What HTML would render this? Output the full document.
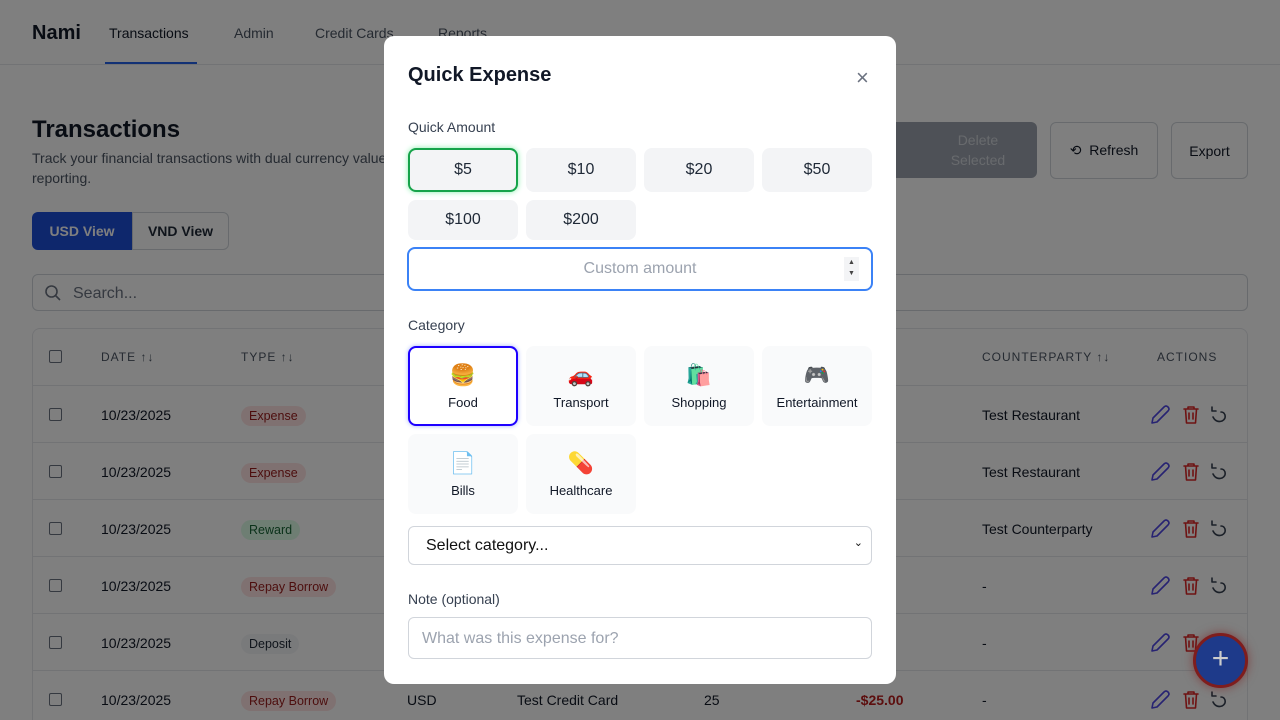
<!DOCTYPE html>
<html><head><meta charset="utf-8"><style>
*{box-sizing:border-box;margin:0;padding:0}
html{width:1280px;height:720px;overflow:hidden}
body{width:1280px;height:720px;overflow:hidden;font-family:"Liberation Sans",sans-serif;background:#fff;position:relative;color:#111827}
.hdr{position:absolute;left:0;top:0;width:1280px;height:65px;border-bottom:1px solid #e5e7eb;background:#fff}
.abs{position:absolute;white-space:nowrap}
.btn{position:absolute;border:1px solid #d1d5db;border-radius:6px;background:#fff;font-size:14px;display:flex;align-items:center;justify-content:center;color:#111827}
.tbl{position:absolute;left:32px;top:328px;width:1216px;height:392px;border:1px solid #e5e7eb;border-bottom:none;border-radius:8px 8px 0 0;background:#fff;overflow:hidden}
.row{position:absolute;left:0;width:1214px;border-top:1px solid #e5e7eb;height:57px}
.cb{position:absolute;left:16px;width:13px;height:13px;border:1px solid #6b7280;border-radius:2px}
.badge{position:absolute;left:208px;font-size:12.5px;padding:3px 8px;border-radius:10px}
.ov{position:fixed;left:0;top:0;width:1280px;height:720px;background:rgba(0,0,0,.5)}
.modal{position:absolute;left:384px;top:36px;width:512px;height:648px;background:#fff;border-radius:10px}
.qa{position:absolute;width:110px;background:#f3f4f6;border-radius:8px;font-size:16px;display:flex;align-items:center;justify-content:center;color:#1f2937}
.tile{position:absolute;width:110px;height:80px;background:#f9fafb;border-radius:8px;font-size:13px;text-align:center;color:#111827}
.tile .e{display:block;font-size:21px;margin-top:18px;height:28px;font-family:"Noto Color Emoji","DejaVu Sans",sans-serif}
.tile .t{display:block;margin-top:3px}
.lbl{position:absolute;left:24px;font-size:14px;color:#374151}
.act{position:absolute;left:1116px;top:17px}
</style></head><body>
<svg width="0" height="0" style="position:absolute"><defs>
<g id="acts" fill="none" stroke-width="1.6" stroke-linecap="round" stroke-linejoin="round">
<path d="M3 20 L4 15 L15 4 Q17 2 19 4 Q21 6 19 8 L8 19 Z" stroke="#4f46e5"/>
<g stroke="#dc2626" transform="translate(30,0)"><path d="M5 6 H19 M9 6 V4 H15 V6 M6.5 6 L7.5 20 H16.5 L17.5 6 M10 10 V16 M14 10 V16"/></g>
<g stroke="#374151" transform="translate(58,0)"><path d="M5 4 V8 H9 M6 14 Q9 20 15 18 Q19 16 18 12 Q17 9 14 9"/></g>
</g></defs></svg>
<div class="hdr">
<div class="abs" style="left:32px;top:22px;font-size:20px;font-weight:bold">Nami</div>
<div class="abs" style="left:109px;top:25px;font-size:14px">Transactions</div>
<div class="abs" style="left:234px;top:25px;font-size:14px;color:#4b5563">Admin</div>
<div class="abs" style="left:315px;top:25px;font-size:14px;color:#4b5563">Credit Cards</div>
<div class="abs" style="left:438px;top:25px;font-size:14px;color:#4b5563">Reports</div>
<div class="abs" style="left:105px;top:62px;width:92px;height:2px;background:#2563eb"></div>
</div>
<div class="abs" style="left:32px;top:116px;font-size:24px;font-weight:bold">Transactions</div>
<div class="abs" style="left:32px;top:148px;font-size:14px;color:#4b5563;line-height:20px">Track your financial transactions with dual currency value<br>reporting.</div>
<div class="btn" style="left:880px;top:122px;width:157px;height:56px;background:#9ca3af;border:none;color:#d1d5db;line-height:20px;text-align:center">&nbsp;&nbsp;&nbsp;&nbsp;&nbsp;&nbsp;&nbsp;&nbsp;&nbsp;&nbsp;Delete<br>&nbsp;&nbsp;&nbsp;&nbsp;&nbsp;&nbsp;&nbsp;&nbsp;&nbsp;&nbsp;Selected</div>
<div class="btn" style="left:1050px;top:122px;width:108px;height:57px">⟲&nbsp; Refresh</div>
<div class="btn" style="left:1171px;top:122px;width:77px;height:57px">Export</div>
<div class="abs" style="left:32px;top:212px;width:100px;height:38px;background:#1d4ed8;color:#fff;font-size:14px;font-weight:bold;border-radius:6px 0 0 6px;display:flex;align-items:center;justify-content:center">USD View</div>
<div class="abs" style="left:132px;top:212px;width:97px;height:38px;border:1px solid #d1d5db;border-radius:0 6px 6px 0;font-size:14px;font-weight:bold;display:flex;align-items:center;justify-content:center;color:#1f2937">VND View</div>
<div class="abs" style="left:32px;top:274px;width:1216px;height:37px;border:1px solid #d1d5db;border-radius:6px;font-size:16px;color:#6b7280;padding:10px 0 0 40px">Search...</div>
<svg class="abs" style="left:44px;top:284px" width="18" height="18" viewBox="0 0 18 18" fill="none" stroke="#6b7280" stroke-width="1.6"><circle cx="7.5" cy="7.5" r="5.5"/><path d="M11.5 11.5L16 16"/></svg>
<div class="tbl">
<div class="cb" style="top:21px"></div>
<div class="abs" style="left:68px;top:21px;font-size:12px;color:#4b5563;letter-spacing:1px">DATE ↑↓</div>
<div class="abs" style="left:208px;top:21px;font-size:12px;color:#4b5563;letter-spacing:1px">TYPE ↑↓</div>
<div class="abs" style="left:949px;top:21px;font-size:12px;color:#4b5563;letter-spacing:1px">COUNTERPARTY ↑↓</div>
<div class="abs" style="left:1124px;top:21px;font-size:12px;color:#4b5563;letter-spacing:1px">ACTIONS</div>
<div class="row" style="top:56px"><div class="cb" style="top:22px"></div><div class="abs" style="left:68px;top:21px;font-size:14px">10/23/2025</div><div class="badge" style="top:20px;background:#fee2e2;color:#991b1b">Expense</div><div class="abs" style="left:949px;top:21px;font-size:14px">Test Restaurant</div><svg class="act" width="90" height="24"><use href="#acts"/></svg></div>
<div class="row" style="top:113px"><div class="cb" style="top:22px"></div><div class="abs" style="left:68px;top:21px;font-size:14px">10/23/2025</div><div class="badge" style="top:20px;background:#fee2e2;color:#991b1b">Expense</div><div class="abs" style="left:949px;top:21px;font-size:14px">Test Restaurant</div><svg class="act" width="90" height="24"><use href="#acts"/></svg></div>
<div class="row" style="top:170px"><div class="cb" style="top:22px"></div><div class="abs" style="left:68px;top:21px;font-size:14px">10/23/2025</div><div class="badge" style="top:20px;background:#dcfce7;color:#166534">Reward</div><div class="abs" style="left:949px;top:21px;font-size:14px">Test Counterparty</div><svg class="act" width="90" height="24"><use href="#acts"/></svg></div>
<div class="row" style="top:227px"><div class="cb" style="top:22px"></div><div class="abs" style="left:68px;top:21px;font-size:14px">10/23/2025</div><div class="badge" style="top:20px;background:#fee2e2;color:#991b1b">Repay Borrow</div><div class="abs" style="left:949px;top:21px;font-size:14px">-</div><svg class="act" width="90" height="24"><use href="#acts"/></svg></div>
<div class="row" style="top:284px"><div class="cb" style="top:22px"></div><div class="abs" style="left:68px;top:21px;font-size:14px">10/23/2025</div><div class="badge" style="top:20px;background:#f3f4f6;color:#1f2937">Deposit</div><div class="abs" style="left:949px;top:21px;font-size:14px">-</div><svg class="act" width="90" height="24"><use href="#acts"/></svg></div>
<div class="row" style="top:341px"><div class="cb" style="top:22px"></div><div class="abs" style="left:68px;top:21px;font-size:14px">10/23/2025</div><div class="badge" style="top:20px;background:#fee2e2;color:#991b1b">Repay Borrow</div><div class="abs" style="left:374px;top:21px;font-size:14px">USD</div><div class="abs" style="left:484px;top:21px;font-size:14px">Test Credit Card</div><div class="abs" style="left:671px;top:21px;font-size:14px">25</div><div class="abs" style="left:823px;top:21px;font-size:14px;color:#b91c1c;font-weight:bold">-$25.00</div><div class="abs" style="left:949px;top:21px;font-size:14px">-</div><svg class="act" width="90" height="24"><use href="#acts"/></svg></div>
</div>
<div class="ov"></div>
<div class="abs" style="left:1193px;top:633px;width:55px;height:55px;border-radius:50%;background:#1e3a8a;border:3px solid #7f1d1d;box-shadow:0 0 10px rgba(127,29,29,.6);color:#ccc;font-size:30px;line-height:46px;text-align:center">+</div>
<div class="modal">
<div class="abs" style="left:24px;top:28px;font-size:20px;font-weight:bold">Quick Expense</div>
<div class="abs" style="left:472px;top:29px;font-size:22px;color:#6b7280">×</div>
<div class="lbl" style="top:83px">Quick Amount</div>
<div class="qa" style="left:24px;top:112px;height:44px;background:#f3f4f6;border:2px solid #16a34a;box-shadow:0 0 6px #86efac">$5</div>
<div class="qa" style="left:142px;top:112px;height:44px">$10</div>
<div class="qa" style="left:260px;top:112px;height:44px">$20</div>
<div class="qa" style="left:378px;top:112px;height:44px">$50</div>
<div class="qa" style="left:24px;top:164px;height:40px">$100</div>
<div class="qa" style="left:142px;top:164px;height:40px">$200</div>
<div class="abs" style="left:23px;top:211px;width:466px;height:44px;border:2px solid #3b82f6;border-radius:8px;font-size:16px;color:#9ca3af;text-align:center;line-height:40px">Custom amount</div>
<div class="abs" style="left:460px;top:221px;width:15px;height:24px;background:#f3f4f6;font-size:7px;color:#444;text-align:center;line-height:11px">▲<br>▼</div>
<div class="lbl" style="top:281px">Category</div>
<div class="tile" style="left:24px;top:310px;background:#fff;border:2px solid #1d00ff;box-shadow:0 0 5px #a5b4fc"><span class="e" style="margin-top:16px">🍔</span><span class="t">Food</span></div>
<div class="tile" style="left:142px;top:310px"><span class="e">🚗</span><span class="t">Transport</span></div>
<div class="tile" style="left:260px;top:310px"><span class="e">🛍️</span><span class="t">Shopping</span></div>
<div class="tile" style="left:378px;top:310px"><span class="e">🎮</span><span class="t">Entertainment</span></div>
<div class="tile" style="left:24px;top:398px"><span class="e">📄</span><span class="t">Bills</span></div>
<div class="tile" style="left:142px;top:398px"><span class="e">💊</span><span class="t">Healthcare</span></div>
<div class="abs" style="left:24px;top:490px;width:464px;height:39px;border:1px solid #d1d5db;border-radius:6px;font-size:16px;padding:10px 0 0 17px;color:#111">Select category...<span style="position:absolute;right:8px;top:9px;font-size:11px">⌄</span></div>
<div class="lbl" style="top:555px">Note (optional)</div>
<div class="abs" style="left:24px;top:581px;width:464px;height:42px;border:1px solid #d1d5db;border-radius:6px;font-size:16px;padding:12px 0 0 13px;color:#9ca3af">What was this expense for?</div>
</div>
</body></html>
